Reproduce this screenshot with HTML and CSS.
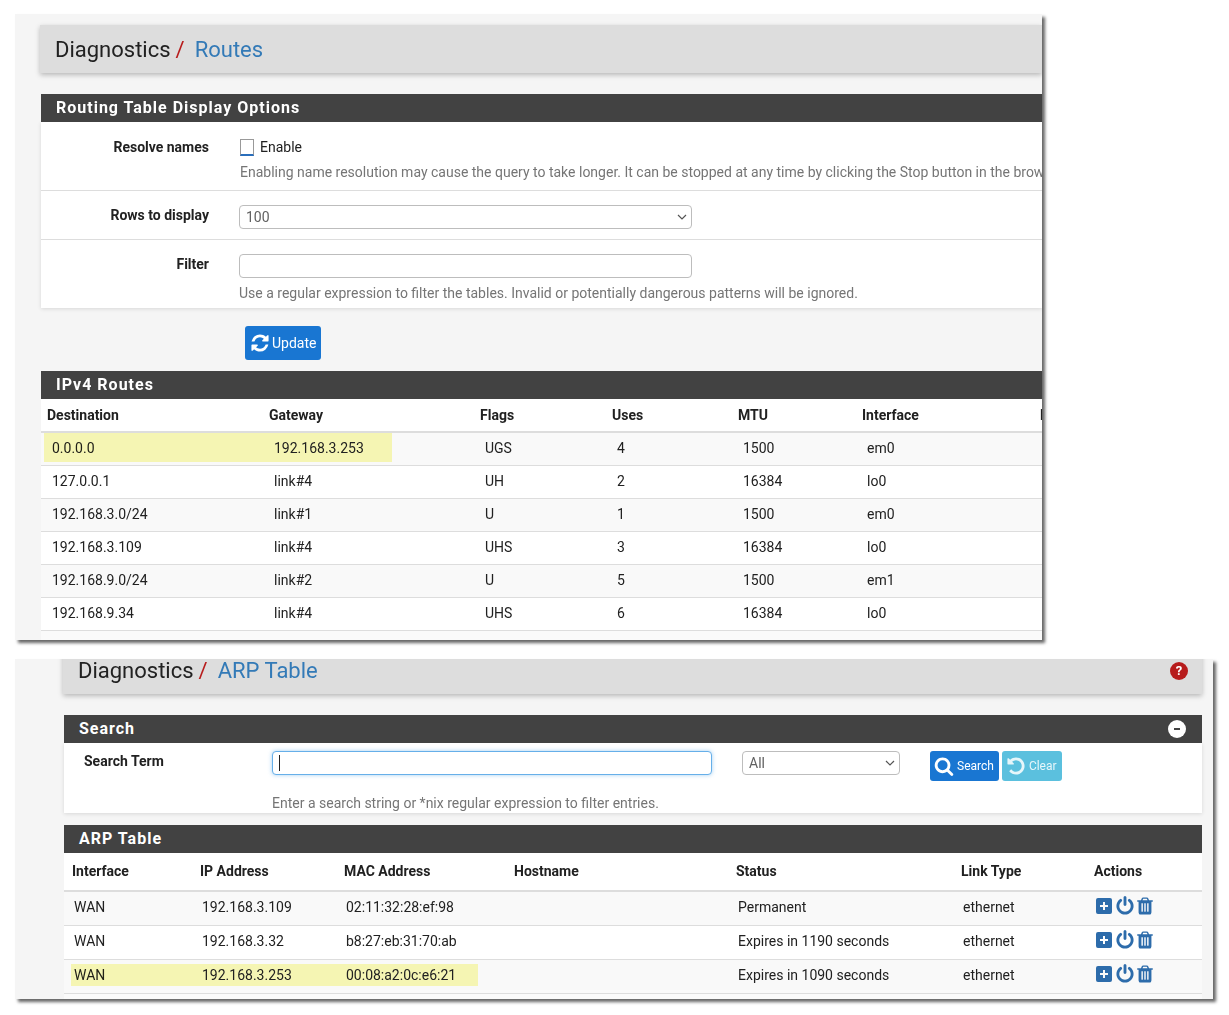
FILE: index.html
```html
<!DOCTYPE html>
<html lang="en">
<head>
    <meta charset="UTF-8">
    <title>Diagnostics</title>
    <link rel="stylesheet" href="styles.css">
</head>
<body>
<svg class="sprite" xmlns="http://www.w3.org/2000/svg">
    <symbol id="i-refresh" viewBox="0 0 1792 1792"><path d="M1639 1056q0 5-1 7-64 268-268 434.5t-478 166.5q-146 0-282.5-55t-243.5-157l-129 129q-19 19-45 19t-45-19-19-45v-448q0-26 19-45t45-19h448q26 0 45 19t19 45-19 45l-137 137q71 66 161 102t187 36q134 0 250-65t186-179q11-17 53-117 8-23 30-23h192q13 0 22.5 9.5t9.5 22.5zm25-800v448q0 26-19 45t-45 19h-448q-26 0-45-19t-19-45 19-45l138-138q-148-137-349-137-134 0-250 65t-186 179q-11 17-53 117-8 23-30 23h-199q-13 0-22.5-9.5t-9.5-22.5v-7q65-268 270-434.5t480-166.5q146 0 284 55.5t245 156.5l130-129q19-19 45-19t45 19 19 45z"/></symbol>
    <symbol id="i-search" viewBox="0 0 1792 1792"><path d="M1216 832q0-185-131.5-316.5t-316.5-131.5-316.5 131.5-131.5 316.5 131.5 316.5 316.5 131.5 316.5-131.5 131.5-316.5zm512 832q0 52-38 90t-90 38q-54 0-90-38l-343-342q-179 124-399 124-143 0-273.5-55.5t-225-150-150-225-55.5-273.5 55.5-273.5 150-225 225-150 273.5-55.5 273.5 55.5 225 150 150 225 55.5 273.5q0 220-124 399l343 343q37 37 37 90z"/></symbol>
    <symbol id="i-undo" viewBox="0 0 1792 1792"><path d="M1664 896q0 156-61 298t-164 245-245 164-298 61q-172 0-327-72.5t-264-204.5q-7-10-6.5-22.5t8.5-20.5l137-138q10-9 25-9 16 2 23 12 73 95 179 147t225 52q104 0 198.5-40.5t163.5-109.5 109.5-163.5 40.5-198.5-40.5-198.5-109.5-163.5-163.5-109.5-198.5-40.5q-98 0-188 35.5t-160 101.5l137 138q31 30 14 69-17 40-59 40h-448q-26 0-45-19t-19-45v-448q0-42 40-59 39-17 69 14l130 129q107-101 244.5-156.5t284.5-55.5q156 0 298 61t245 164 164 245 61 298z"/></symbol>
    <symbol id="i-plus" viewBox="-1 -2 20 20"><path fill-rule="evenodd" d="M2 0h12a2 2 0 0 1 2 2v12a2 2 0 0 1-2 2H2a2 2 0 0 1-2-2V2a2 2 0 0 1 2-2zM7 4v3H4v2h3v3h2V9h3V7H9V4z"/></symbol>
    <symbol id="i-power" viewBox="0 0 1792 1792"><path d="M1664 896q0 156-61 298t-164 245-245 164-298 61-298-61-245-164-164-245-61-298q0-182 80.5-343t226.5-270q43-32 95.5-25t83.5 50q32 42 24.5 94.5t-49.5 84.5q-98 74-151.5 181t-53.5 228q0 104 40.5 198.5t109.5 163.5 163.5 109.5 198.5 40.5 198.5-40.5 163.5-109.5 109.5-163.5 40.5-198.5q0-121-53.5-228t-151.5-181q-42-32-49.5-84.5t24.5-94.5q31-43 84-50t95 25q146 109 226.5 270t80.5 343zm-640-768v640q0 52-38 90t-90 38-90-38-38-90v-640q0-52 38-90t90-38 90 38 38 90z"/></symbol>
    <symbol id="i-trash" viewBox="0 0 1792 1792"><path d="M704 1376v-704q0-14-9-23t-23-9h-64q-14 0-23 9t-9 23v704q0 14 9 23t23 9h64q14 0 23-9t9-23zm256 0v-704q0-14-9-23t-23-9h-64q-14 0-23 9t-9 23v704q0 14 9 23t23 9h64q14 0 23-9t9-23zm256 0v-704q0-14-9-23t-23-9h-64q-14 0-23 9t-9 23v704q0 14 9 23t23 9h64q14 0 23-9t9-23zm-544-992h448l-48-117q-7-9-17-11h-317q-10 2-17 11zm928 32v64q0 14-9 23t-23 9h-96v948q0 83-47 143.5t-113 60.5h-832q-66 0-113-58.5t-47-141.5v-952h-96q-14 0-23-9t-9-23v-64q0-14 9-23t23-9h309l70-167q15-37 54-63t79-26h320q40 0 79 26t54 63l70 167h309q14 0 23 9t9 23z"/></symbol>
</svg>

<!-- first screenshot: routes -->
<div class="shot shot-routes">
    <div class="page-head">
        <span>Diagnostics</span><span class="slash">/</span><a class="crumb">Routes</a>
    </div>

    <div class="panel-head panel-first">Routing Table Display Options</div>
    <div class="panel-body">
        <div class="form-row row-check">
            <div class="form-label">Resolve names</div>
            <div class="form-control">
                <label class="check"><input type="checkbox"> Enable</label>
                <div class="help help-check">Enabling name resolution may cause the query to take longer. It can be stopped at any time by clicking the Stop button in the browser.</div>
            </div>
        </div>
        <div class="form-row row-rows">
            <div class="form-label">Rows to display</div>
            <div class="form-control">
                <select class="field field-wide"><option>100</option></select>
            </div>
        </div>
        <div class="form-row row-filter">
            <div class="form-label">Filter</div>
            <div class="form-control">
                <input class="field field-wide" type="text">
                <div class="help">Use a regular expression to filter the tables. Invalid or potentially dangerous patterns will be ignored.</div>
            </div>
        </div>
    </div>

    <button class="btn btn-primary btn-update"><svg class="icon-btn"><use href="#i-refresh"/></svg>Update</button>

    <div class="panel-head">IPv4 Routes</div>
    <div class="table-wrap">
        <table class="table routes">
            <colgroup>
                <col class="r1"><col class="r2"><col class="r3"><col class="r4"><col class="r5"><col class="r6"><col class="r7">
            </colgroup>
            <thead>
            <tr><th>Destination</th><th>Gateway</th><th>Flags</th><th>Uses</th><th>MTU</th><th>Interface</th><th>Expire</th></tr>
            </thead>
            <tbody>
            <tr><td><span class="marker marker-route"></span>0.0.0.0</td><td>192.168.3.253</td><td>UGS</td><td>4</td><td>1500</td><td>em0</td><td></td></tr>
            <tr><td>127.0.0.1</td><td>link#4</td><td>UH</td><td>2</td><td>16384</td><td>lo0</td><td></td></tr>
            <tr><td>192.168.3.0/24</td><td>link#1</td><td>U</td><td>1</td><td>1500</td><td>em0</td><td></td></tr>
            <tr><td>192.168.3.109</td><td>link#4</td><td>UHS</td><td>3</td><td>16384</td><td>lo0</td><td></td></tr>
            <tr><td>192.168.9.0/24</td><td>link#2</td><td>U</td><td>5</td><td>1500</td><td>em1</td><td></td></tr>
            <tr><td>192.168.9.34</td><td>link#4</td><td>UHS</td><td>6</td><td>16384</td><td>lo0</td><td></td></tr>
            </tbody>
        </table>
    </div>
</div>

<!-- second screenshot: arp table -->
<div class="shot shot-arp">
    <div class="page-head">
        <span>Diagnostics</span><span class="slash">/</span><a class="crumb">ARP Table</a>
        <span class="help-round">?</span>
    </div>

    <div class="panel-head panel-first">Search<span class="minus-round"></span></div>
    <div class="panel-body search-body">
        <div class="search-row">
            <div class="form-label search-label">Search Term</div>
            <div class="caret-wrap">
                <input class="field field-focus" type="text">
                <span class="caret"></span>
            </div>
            <select class="field field-all"><option>All</option></select>
            <button class="btn btn-primary btn-small btn-search"><svg class="icon-btn"><use href="#i-search"/></svg>Search</button>
            <button class="btn btn-info btn-small"><svg class="icon-btn"><use href="#i-undo"/></svg>Clear</button>
        </div>
        <div class="help help-search">Enter a search string or *nix regular expression to filter entries.</div>
    </div>

    <div class="panel-head panel-arp">ARP Table</div>
    <div class="table-wrap">
        <table class="table arp">
            <colgroup>
                <col class="a1"><col class="a2"><col class="a3"><col class="a4"><col class="a5"><col class="a6"><col class="a7">
            </colgroup>
            <thead>
            <tr><th>Interface</th><th>IP Address</th><th>MAC Address</th><th>Hostname</th><th>Status</th><th>Link Type</th><th>Actions</th></tr>
            </thead>
            <tbody>
            <tr>
                <td>WAN</td><td>192.168.3.109</td><td>02:11:32:28:ef:98</td><td></td><td>Permanent</td><td>ethernet</td>
                <td class="actions"><svg><use href="#i-plus"/></svg><svg><use href="#i-power"/></svg><svg><use href="#i-trash"/></svg></td>
            </tr>
            <tr>
                <td>WAN</td><td>192.168.3.32</td><td>b8:27:eb:31:70:ab</td><td></td><td>Expires in 1190 seconds</td><td>ethernet</td>
                <td class="actions"><svg><use href="#i-plus"/></svg><svg><use href="#i-power"/></svg><svg><use href="#i-trash"/></svg></td>
            </tr>
            <tr>
                <td><span class="marker marker-arp"></span>WAN</td><td>192.168.3.253</td><td>00:08:a2:0c:e6:21</td><td></td><td>Expires in 1090 seconds</td><td>ethernet</td>
                <td class="actions"><svg><use href="#i-plus"/></svg><svg><use href="#i-power"/></svg><svg><use href="#i-trash"/></svg></td>
            </tr>
            </tbody>
        </table>
    </div>
</div>
</body>
</html>
```

FILE: styles.css
```css
*{
    box-sizing: border-box;
}
body{
    margin: 0;
    padding: 14px 0 16px 15px;
    background: #fff;
    color: #212121;
    font-family: Roboto, "Liberation Sans", sans-serif;
    font-size: 14px;
    line-height: 20px;
}
.sprite{
    display: none;
}
/*each screenshot is clipped on its own*/
.shot{
    overflow: hidden;
    background: #f5f5f5;
    box-shadow: 3px 3px 3px rgba(0,0,0,0.6);
}
.shot-routes{
    width: 1027px;
    height: 626px;
    padding: 11px 0 0 26px;
}
.shot-arp{
    width: 1198px;
    height: 340px;
    margin-top: 19px;
    padding: 0 11px 0 49px;
}
.page-head{
    position: relative;
    height: 48px;
    margin-left: -1px;
    padding-left: 15px;
    background: #ddd;
    box-shadow: 0 2px 5px rgba(0,0,0,0.25);
    font-size: 22px;
    line-height: 49px;
}
.shot-arp .page-head{
    margin-top: -13px;
}
.slash{
    margin: 0 10px 0 5px;
    color: #b71c1c;
}
.crumb{
    color: #337ab7;
}
.help-round{
    position: absolute;
    top: 16px;
    right: 14px;
    width: 18px;
    height: 18px;
    border-radius: 50%;
    background: #b71c1c;
    color: #fff;
    font-size: 13px;
    font-weight: 700;
    line-height: 18px;
    text-align: center;
}
.panel-head{
    position: relative;
    height: 28px;
    padding-left: 15px;
    background: #424242;
    color: #fff;
    font-size: 16px;
    font-weight: 700;
    letter-spacing: 1px;
    line-height: 28px;
}
.panel-first{
    margin-top: 21px;
}
.panel-arp{
    margin-top: 12px;
}
.minus-round{
    position: absolute;
    top: 5px;
    right: 16px;
    width: 18px;
    height: 18px;
    border-radius: 50%;
    background: #fff;
}
.minus-round:after{
    content: "";
    position: absolute;
    top: 8px;
    left: 6px;
    width: 6px;
    height: 2px;
    background: #424242;
}
.panel-body{
    background: #fff;
    box-shadow: 0 1px 4px rgba(0,0,0,0.12);
}
.form-row{
    display: flex;
    border-bottom: 1px solid #ddd;
}
.form-row:last-child{
    border-bottom: 0;
}
.row-check{
    height: 69px;
    padding-top: 15px;
}
.row-rows{
    height: 49px;
    padding-top: 14px;
}
.row-filter{
    height: 68px;
    padding-top: 14px;
}
.form-label{
    width: 168px;
    flex: none;
    font-weight: 700;
    text-align: right;
}
.form-control{
    flex: none;
    width: 850px;
    margin-left: 30px;
    white-space: nowrap;
}
.check{
    display: flex;
    align-items: center;
    gap: 6px;
    margin-left: 1px;
}
.check input{
    appearance: none;
    width: 14px;
    height: 17px;
    margin: 0;
    border: 1px solid #999;
    border-bottom: 2px solid #2a6ebb;
    background: #fff;
}
.help{
    margin-top: 5px;
    color: #757575;
}
.help-check{
    margin-left: 1px;
}
.field{
    display: block;
    height: 24px;
    padding: 0 6px;
    border: 1px solid #bdbdbd;
    border-radius: 4px;
    background: #fff;
    color: #616161;
    font-family: inherit;
    font-size: 14px;
}
select.field{
    appearance: none;
    background-image: url("data:image/svg+xml,%3Csvg xmlns='http://www.w3.org/2000/svg' width='10' height='6'%3E%3Cpath d='M1 1l4 4 4-4' fill='none' stroke='%23555' stroke-width='1.2'/%3E%3C/svg%3E");
    background-repeat: no-repeat;
    background-position: right 4px center;
}
.field-wide{
    width: 453px;
}
.field-focus{
    width: 440px;
    border-color: #66afe9;
    box-shadow: 0 0 4px rgba(102,175,233,0.6);
    outline: 0;
}
.field-all{
    width: 158px;
    margin-left: 30px;
}
.caret-wrap{
    position: relative;
}
.caret{
    position: absolute;
    top: 4px;
    left: 7px;
    width: 1px;
    height: 16px;
    background: #212121;
}
.btn{
    display: flex;
    align-items: center;
    gap: 3px;
    border: 0;
    border-radius: 3px;
    color: #fff;
    font-family: inherit;
    font-size: 14px;
}
.btn-primary{
    background: #1976d2;
}
.btn-info{
    background: #5bc0de;
    color: #e6f6fa;
}
.btn-update{
    width: 76px;
    height: 34px;
    margin: 18px 0 11px 204px;
    padding: 0 0 0 5px;
    gap: 2px;
}
.btn-small{
    height: 30px;
    padding: 0 5px 0 4px;
    font-size: 12px;
}
.btn-search{
    margin: 0 3px 0 30px;
}
.icon-btn{
    width: 20px;
    height: 20px;
    fill: currentColor;
}
.search-body{
    height: 70px;
    padding: 8px 0 0 20px;
}
.search-row{
    display: flex;
    align-items: flex-start;
}
.search-label{
    width: 188px;
    text-align: left;
}
.help-search{
    margin: 12px 0 0 188px;
}
/*tables*/
.table-wrap{
    height: 300px;
    background: #fafafa;
}
.table{
    table-layout: fixed;
    border-collapse: collapse;
    background: #fff;
}
.table th{
    font-weight: 700;
    text-align: left;
    white-space: nowrap;
}
.table td{
    position: relative;
    border-bottom: 1px solid #ddd;
    white-space: nowrap;
}
.table thead tr{
    border-bottom: 2px solid #ddd;
}
.table tbody tr:nth-child(odd){
    background: #f9f9f9;
}
.routes{
    width: 1100px;
}
.routes th{
    height: 33px;
    padding: 0 0 0 6px;
}
.routes td{
    height: 33px;
    padding: 0 0 2px 11px;
}
.r1{ width: 222px; }
.r2{ width: 211px; }
.r3{ width: 132px; }
.r4{ width: 126px; }
.r5{ width: 124px; }
.r6{ width: 178px; }
.r7{ width: 107px; }
.arp{
    width: 1138px;
}
.arp th{
    height: 38px;
    padding: 0 0 2px 8px;
}
.arp td{
    height: 34px;
    padding: 0 0 2px 10px;
}
.a1{ width: 128px; }
.a2{ width: 144px; }
.a3{ width: 170px; }
.a4{ width: 222px; }
.a5{ width: 225px; }
.a6{ width: 133px; }
.a7{ width: 116px; }
.arp .actions{
    padding: 0 0 5px 9px;
}
.actions svg{
    display: inline-block;
    width: 20px;
    height: 20px;
    fill: #2d6cab;
    vertical-align: middle;
}
/*yellow highlighter painted over the rows*/
.marker{
    position: absolute;
    background: #fbfbb8;
    mix-blend-mode: multiply;
}
.marker-route{
    top: 0;
    left: 3px;
    width: 348px;
    height: 29px;
}
.marker-arp{
    top: 4px;
    left: 7px;
    width: 407px;
    height: 22px;
}
```
